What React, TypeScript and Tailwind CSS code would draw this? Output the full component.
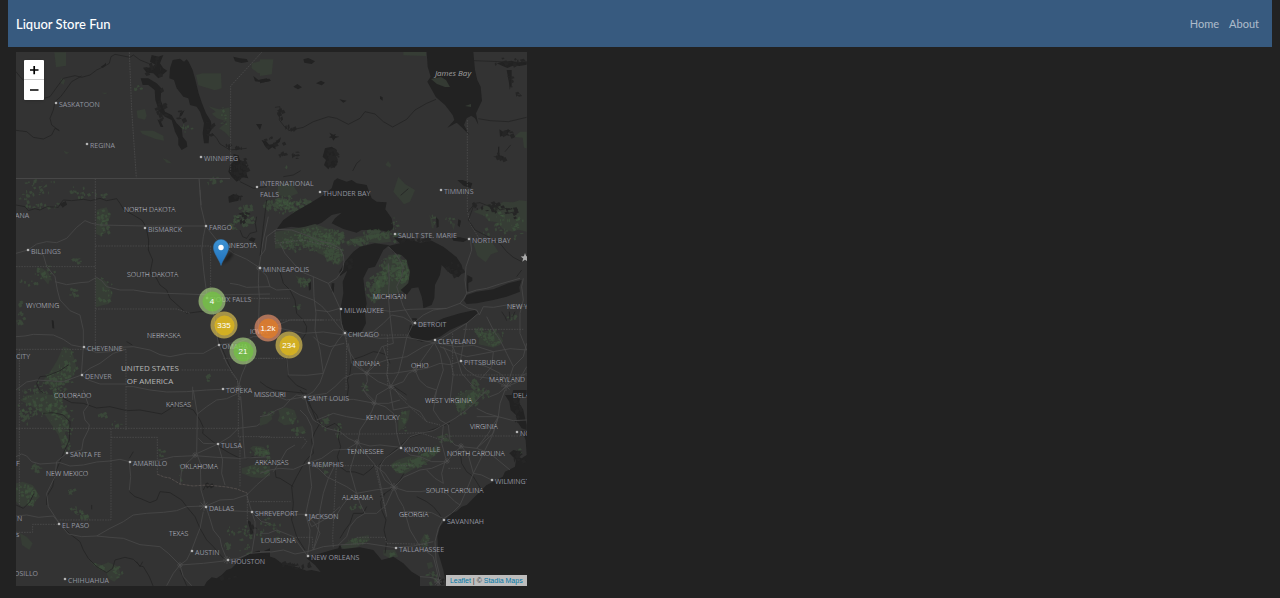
import React from "react";

type Patch = [number, number, number, number, number];

type Sheet = {
  x: number;
  y: number;
  water: string[];
  green: string[];
  rivers: string[];
  roads: string[];
  borders: string[];
  // Woodland patches: centre x, centre y, radius x, radius y, number of flecks
  woods: Patch[];
  // Lake districts, same fields
  ponds: Patch[];
};

// Each sheet is drawn at three units per map pixel and placed at its origin.
const sheets: Sheet[] = [
  {
    x: 0,
    y: 0,
    water: [
      "M518,180L540,176 552,185 560,178 566,185 578,210 585,235 596,280 606,310 618,340 632,362 637,385 628,400 626,430 612,430 608,400 612,370 600,335 590,320 570,315 565,295 550,290 530,265 522,240 508,235 510,205Z",
      "M422,235L445,235 470,250 484,265 482,300 495,335 515,345 530,370 545,385 548,410 560,425 562,440 545,450 535,435 535,415 525,395 515,360 495,350 478,335 466,300 464,270 445,255 428,255Z",
      "M455,165L475,170 490,165 480,190 490,205 502,212 475,235 460,220 440,218 430,205 455,202 468,195 450,185Z",
      "M472,358l10,5 8,18 -8,0zM540,340l14,-10 -8,16 -8,6z",
      "M690,495L705,480 700,462 715,466 720,480 730,485 742,500 738,520 745,535 728,532 710,545 695,530 685,515Z",
      "M700,170l20,5 20,2 5,8 -20,4 -20,-5zM760,228l15,12 25,-5 10,8 -20,4 -25,-3zM768,372l18,0 -6,18zM785,420l12,10 13,5 0,12 -15,-8z",
      "M302,200l10,-6 6,-6 0,8 -10,8z",
    ],
    green: [
      "M163,157h35v40l-30,5z",
      "M588,225l20,-5 55,0 2,45 -20,6 -50,-15z",
      "M410,332l25,-5 5,20 -5,12 -22,-5z",
      "M420,392l40,0 30,15 2,15 -25,-5 -40,-15z",
      "M755,190l30,-8 30,0 0,40 -40,-2 -20,-15z",
      "M625,318l18,6 14,4 14,-2 18,-4 0,90 -14,-15 -18,-12 10,-8 14,-12 -30,-10 -16,-14 12,-6z",
      "M183,235l12,5 -4,14 -10,-5zM488,475l15,5 12,10 -15,-2zM190,452l18,6 -10,5zM305,278l18,0 -8,5z",
    ],
    rivers: [
      "M48,215L60,230 72,242",
      "M132,295L150,290 168,265 190,235 225,227 245,232 270,225 290,210 315,198 328,190 333,170 345,163 370,168 390,172 400,165 420,180 445,190 455,195",
      "M245,228L215,245 197,270 182,290 165,305 160,330 150,355 155,375 178,392 165,385 155,405 130,417 100,412 80,395 48,391",
      "M637,400L650,415 660,432 690,450 740,445",
      "M720,545L760,565 800,560",
    ],
    roads: [],
    borders: ["M388,157L395,330 409,533", "M286,535V600", "M785,157L692,258V515"],
    woods: [
      [120, 560, 60, 26, 22],
      [665, 350, 20, 30, 8],
      [560, 385, 30, 15, 9],
      [640, 540, 25, 12, 14],
      [240, 575, 40, 20, 8],
      [410, 265, 10, 10, 5],
    ],
    ponds: [
      [455, 200, 32, 35, 14],
      [480, 320, 18, 55, 16],
      [540, 350, 15, 20, 5],
      [625, 385, 12, 30, 8],
      [715, 505, 28, 36, 34],
      [680, 440, 55, 8, 8],
    ],
  },
  {
    x: 260,
    y: 40,
    water: [
      "M500,36L503,80 512,110 502,125 528,172 555,195 578,225 583,240 562,263 590,248 605,262 628,285 612,255 620,235 634,227 645,235 655,255 648,220 666,182 662,140 652,120 645,90 640,36Z",
      "M50,568L70,540 105,515 150,490 185,468 215,445 222,422 232,415 260,425 275,420 290,430 320,435 335,475 350,485 380,487 376,508 395,535 400,565 385,577 370,572 345,570 305,570 290,578 250,567 215,550 225,535 245,518 215,525 185,548 140,566 95,560Z",
      "M195,325L215,320 230,330 228,350 234,365 224,383 210,380 205,388 192,375 198,360 188,350Z",
      "M130,58l15,-4 20,10 -10,8 -22,-4zM168,130l15,-8 12,6 -10,8zM100,140l12,-8 14,10 -12,6zM238,178l22,4 -10,6zM360,168l8,4 0,10 -8,-6z",
      "M592,420l15,0 30,10 -5,14 -20,-6zM0,120l28,-4 5,6 -33,8zM740,90l15,0 0,50 -6,0z",
      "M710,70l18,-5 12,5 14,-8 18,6 28,-4 0,10 -22,4 -16,-2 -20,8 -14,-6z",
      "M5,300l14,4 8,10 14,-2 12,-12 10,-8 -4,14 -14,10 2,12 -10,-6 -12,8 -8,-14z",
      "M718,268l12,8 14,-8 8,4 -10,8 8,8 -16,-4 -14,6z",
      "M208,278l12,6 8,-2 -4,6 14,2 -12,4 -6,8 -4,-8 -10,-2 8,-4z",
      "M700,350l14,-2 0,-28 4,0 0,26 14,4 -2,6 -16,-2z",
    ],
    green: [
      "M430,36h68v12l-68,-2z",
      "M415,410l20,22 30,18 -15,35 -18,8 -32,-38z",
      "M780,275h20v50l-8,-2 -4,-30 -25,-2z",
      "M0,58h40l-5,45 -35,5z",
      "M55,435l40,-5 20,30 -30,12 -35,-8z",
      "M640,515l20,-8 22,-14 28,4 20,-12 30,2 18,-6 22,2 0,92 -24,-6 -18,6 -30,-8 -16,-20 -26,-4 -14,-16z",
      "M376,375l8,-12 10,12 -4,8z",
      "M508,525l8,10 6,30 -6,0zM568,535l10,14 8,2 -6,20 -4,-16z",
    ],
    rivers: [
      "M85,272L130,262 160,245 205,230 230,235 265,253 300,235 315,215 345,222 370,245 398,261 440,238 465,210 500,190 528,178",
      "M655,236L690,242 745,245 800,232",
      "M642,62L720,65 800,68",
      "M45,202L60,200 58,240 75,262 90,272",
      "M278,393L290,370 302,360",
      "M70,410L100,405 122,392",
      "M622,518L645,490 660,488 690,500 705,496 720,510 740,505 745,520 762,516",
      "M735,335L752,315M422,466L445,446",
    ],
    roads: [],
    borders: ["M622,240V510L630,550 660,600"],
    woods: [
      [75, 480, 35, 14, 40],
      [95, 505, 50, 22, 60],
      [130, 485, 30, 10, 24],
      [720, 540, 70, 40, 20],
      [75, 378, 4, 4, 3],
    ],
    ponds: [
      [40, 305, 38, 20, 8],
      [735, 280, 22, 12, 6],
      [718, 350, 22, 12, 6],
      [95, 265, 30, 8, 6],
      [57, 225, 8, 24, 6],
      [58, 345, 12, 6, 4],
      [105, 345, 12, 10, 5],
      [740, 65, 55, 14, 12],
      [700, 510, 60, 12, 12],
      [748, 115, 8, 30, 6],
      [770, 160, 8, 8, 3],
      [212, 352, 20, 30, 24],
    ],
  },
  {
    x: 0,
    y: 190,
    water: ["M685,20l15,-8 20,6 -5,14 -28,6zM745,150l10,-8 12,4 -6,10zM155,390l6,2 2,24 -6,-2z"],
    green: [
      "M110,232l15,2 20,13 12,25 -8,-2 -4,14 -12,-14 -8,-8z",
      "M286,262l12,4 18,6 14,24 8,16 -6,14 -6,16 -18,4 -20,6z",
      "M290,60l10,-4 20,-4 6,15 6,10 -8,18 -8,18 4,14 -20,10 -12,-6z",
      "M190,470l15,4 10,6 6,20 9,35 -10,20 -20,25 -18,6 -22,14 -16,-18 -14,-12 14,-16 16,-24 10,-16z",
    ],
    rivers: [
      "M48,45L75,50 85,62 105,56 120,60 140,50 175,52 182,40 190,30 215,32 250,28 272,32 300,25 320,32 350,26 360,40 372,60 400,75 425,90 432,100 440,120 446,150 445,180 458,210 450,250 468,262 480,285 500,300 510,325 560,370 600,365 625,365",
      "M645,380L652,430 660,460 690,530 712,575",
      "M130,610L118,600 110,580 120,560 140,558 160,550 180,542 205,525",
      "M380,455L397,465",
      "M720,120L728,140 740,145 750,130 770,125 766,100 770,80",
    ],
    roads: [
      "M48,190L84,180 110,162 140,155 170,158 200,145 230,112 255,92 275,100 300,105 435,108 617,108",
      "M84,180L130,195 140,230 165,260 172,300 180,330 210,362 240,375 250,420 250,470 244,555",
      "M165,275L200,284 240,278 265,276 290,262 305,272 320,290 360,300 400,300 450,308 500,310 640,315 810,312",
      "M48,440L75,438 100,433 160,435 190,448 215,465 250,472 290,488 330,485 360,472 400,470 450,480 480,494 510,500 560,490 610,490 655,465",
      "M244,555L270,535 300,520 340,490 378,478",
      "M48,600L80,576 110,570 190,575 244,555 265,570 300,582 378,582",
      "M378,590L400,590 450,600 500,606 560,605 620,600 667,598 715,590",
      "M600,0L603,50 617,108 610,140 605,180 612,250 620,310 640,370 655,460 680,520 712,570 718,630",
      "M617,108L650,150 700,190 740,208 777,232 810,240",
      "M777,232L775,280 778,320 775,430",
      "M655,465L720,455 760,440 810,440",
      "M715,590L725,555 740,520 752,450",
      "M690,280L715,284 740,292 810,290",
      "M777,232L790,150 805,80",
      "M578,590V630",
    ],
    borders: [
      "M286,0V480",
      "M286,168H632",
      "M48,230H286",
      "M286,357H530L570,370",
      "M48,478H378V720",
      "M58,478V720",
      "M632,168V310",
      "M545,540H690L720,585V630",
      "M670,505H810",
      "M625,325H810",
    ],
    woods: [
      [305, 75, 20, 20, 14],
      [310, 115, 16, 30, 14],
      [310, 300, 26, 40, 16],
      [130, 245, 30, 22, 18],
      [85, 275, 30, 10, 8],
      [215, 310, 14, 16, 10],
      [200, 530, 30, 50, 36],
      [165, 575, 45, 34, 44],
      [110, 600, 60, 28, 34],
      [225, 210, 20, 8, 10],
      [735, 60, 24, 16, 26],
      [730, 90, 34, 20, 36],
      [700, 95, 18, 24, 16],
      [60, 385, 16, 22, 12],
      [70, 20, 22, 20, 12],
      [120, 45, 60, 12, 18],
      [260, 15, 60, 10, 14],
      [620, 570, 6, 16, 6],
      [55, 340, 6, 8, 6],
    ],
    ponds: [
      [725, 78, 20, 18, 12],
      [185, 42, 8, 6, 7],
      [705, 22, 16, 8, 6],
    ],
  },
  {
    x: 260,
    y: 200,
    water: [
      "M388,136L370,150 360,170 345,200 325,205 318,218 310,235 315,280 320,310 315,340 318,370 305,395 290,404 275,408 252,395 243,360 242,325 250,280 248,245 262,212 240,228 238,215 255,185 280,155 300,140 345,130Z",
      "M385,138L420,130 400,112 450,118 480,128 515,122 550,140 575,160 590,172 605,195 610,215 595,232 570,220 545,195 540,225 525,255 523,295 515,315 490,325 488,305 485,290 475,262 455,265 440,285 422,270 445,250 450,215 440,180 425,165 400,158Z",
      "M445,400L450,375 465,372 480,382 510,375 550,355 600,340 645,330 655,340 625,365 570,390 540,410 510,420 485,425 455,415Z",
      "M612,302L620,285 650,275 700,268 745,250 785,240 778,262 780,275 740,290 700,300 650,310 620,312Z",
      "M215,250l8,0 -2,28 -8,-5zM145,250l8,-4 0,22 -6,4zM456,355l14,0 2,12 -12,4z",
      "M528,50l8,10 0,20 -6,4zM595,58l8,4 -4,20 -6,-6zM575,112l25,0 25,6 -15,8 -30,-4zM622,225l15,8 0,10 -12,6 0,25 -6,0z",
    ],
    green: [
      "M45,95l30,-4 60,-11 30,-8 50,18 40,15 -15,25 10,50 -14,16 -16,-6 -25,-22 -20,-8 -24,-20 -36,-4 -70,10z",
      "M255,125l35,-15 40,-4 50,-11 15,30 -40,5 -50,-6 -40,14z",
      "M385,165l20,-2 20,14 15,8 12,45 -10,22 -10,20 -20,8 -30,6 -35,-4 0,-50 20,-22z",
      "M640,130l55,-5 20,30 -22,8 -16,24 -25,-20z",
      "M660,398l20,-6 35,6 15,25 -10,12 -20,8 -45,-10z",
      "M105,225l10,6 20,4 10,20 -15,4 -10,-8z",
    ],
    rivers: [
      "M60,215L70,250 90,270 105,300 110,340 128,358 140,380 138,400 125,420 95,450 80,480 85,530 110,556 140,570",
      "M260,600L266,560 262,540 270,520 275,480 310,468 340,455 360,458 380,465 390,490",
      "M640,20L625,60 645,90 680,108 720,130 740,155 760,172 785,185",
      "M20,0L10,80 0,170",
      "M770,230L785,210",
      "M0,545L20,560 40,570 140,580",
      "M395,555L440,585",
      "M725,335L735,350 740,362M765,335L758,350M748,335L750,360",
    ],
    roads: [
      "M0,208L20,228 30,260 50,270 90,268 120,285 160,300 185,318 205,340 230,372 253,398",
      "M0,170L15,150 20,110 50,88",
      "M60,130L75,160 105,195 130,218 160,230 205,250 222,285 240,325",
      "M50,88L95,90 150,110 180,124 210,130 240,145 250,165 252,185 248,210 230,235 205,250",
      "M160,230L162,290 168,340 165,390 180,450 190,520",
      "M240,325L205,335 165,330",
      "M240,325L244,370 253,398",
      "M0,370L60,385 130,400 190,396 253,405 340,395 370,370 395,345 430,352 460,370",
      "M253,398L235,420 215,450 190,520 180,548 160,575 135,590",
      "M253,398L265,450 290,490 320,520",
      "M270,405L310,408 360,415 440,412 480,420 523,428 590,440 640,436 700,455 750,446 800,450",
      "M320,520L355,545 392,560 440,600",
      "M320,520L400,520 465,510 500,505 540,490 570,494 601,484 640,488 680,500 720,520 750,550",
      "M320,520L280,522 250,535 225,560 200,580 135,590",
      "M320,520L345,480 365,440 400,430 395,390 390,345 385,290 388,240 385,190",
      "M460,370L445,345 430,320 410,260 425,230 430,200 410,165 385,140",
      "M460,370L440,412 430,460 415,520 392,560",
      "M523,428L500,460 465,510 445,520 430,545 392,560",
      "M523,428L540,460 550,510 530,570 520,600",
      "M460,370L490,345 520,330 560,325 600,310 612,295 620,280 650,270 680,265 720,252 780,235",
      "M320,325L350,328 395,335 450,328 560,325",
      "M600,310L625,325 650,330 658,345",
      "M655,340L620,370 570,400 523,428",
      "M658,345L670,320 700,322 740,315 800,320",
      "M601,484L605,460 610,430 620,370",
      "M601,484L620,510 650,530 690,535 720,550 740,560 770,535 800,520",
      "M740,560L750,530 760,500 740,460 720,420 700,390 680,350",
      "M740,560L715,580 690,590",
      "M740,560L775,545 800,500",
      "M790,235L785,260 790,300 780,340 780,400 800,450",
      "M620,280L615,240 618,200 635,150 630,110",
      "M80,470L85,525 140,526 190,520",
      "M0,390L50,376 90,360 190,360",
      "M160,410L180,430 210,440 253,430",
      "M320,520L322,545 310,570 340,600",
      "M320,520L275,490 265,430",
      "M320,520L350,490 380,480 440,470 490,440 523,428",
      "M392,560L380,525 385,490 370,440",
      "M465,510L478,540 500,560 530,570",
      "M550,440L570,480 580,520 570,600",
      "M575,430L590,470 605,520 640,560",
      "M700,455L695,500 660,540",
      "M540,440L590,460 620,470 700,455",
      "M760,500L790,470 800,430",
    ],
    borders: [
      "M0,295H90",
      "M60,360H240",
      "M260,405L258,570",
      "M383,405V555",
      "M275,405H440",
      "M578,400V525H800",
      "M610,388H790",
      "M45,90V130L130,120 190,135 245,150",
      "M0,475H75",
    ],
    woods: [
      [90, 125, 45, 30, 50],
      [155, 115, 50, 38, 120],
      [210, 110, 40, 25, 80],
      [215, 155, 30, 35, 90],
      [290, 125, 30, 12, 45],
      [345, 103, 45, 16, 80],
      [400, 205, 46, 42, 130],
      [425, 220, 24, 34, 50],
      [335, 265, 22, 38, 80],
      [360, 235, 24, 24, 44],
      [130, 245, 22, 14, 24],
      [640, 565, 14, 28, 40],
      [610, 585, 20, 16, 26],
      [50, 15, 45, 16, 80],
      [690, 410, 42, 26, 44],
      [650, 395, 14, 14, 18],
      [720, 80, 65, 50, 22],
      [110, 320, 14, 6, 6],
      [310, 555, 12, 18, 9],
      [515, 60, 6, 20, 6],
      [565, 60, 12, 10, 6],
      [400, 85, 8, 40, 14],
      [760, 350, 20, 12, 8],
    ],
    ponds: [
      [680, 15, 55, 8, 12],
      [750, 40, 25, 20, 8],
      [580, 205, 28, 22, 10],
      [470, 120, 60, 6, 10],
      [262, 185, 16, 24, 10],
    ],
  },
  {
    x: 0,
    y: 390,
    water: ["M810,475L790,484 775,482 750,490 735,500 715,510 705,525 695,535 680,540 665,555 650,565 635,562 620,575 612,590 H810Z", "M742,390l10,5 8,35 -6,2z"],
    green: [
      "M60,30l20,-14 40,-6 30,4 30,6 10,25 20,35 -10,20 -5,30 10,25 -20,10 -10,-30 -20,-30 -20,-30 -30,-20z",
      "M48,280l20,-5 30,10 10,14 12,21 -10,10 -10,15 -35,5 -17,-15z",
      "M60,430l20,10 18,20 -10,20 -22,-15z",
      "M270,515l35,10 20,-8 30,13 8,25 -20,20 -16,-8 -8,-18 -26,-14z",
      "M725,235l40,-12 45,5 0,30 -25,6 -30,-2 -30,-12z",
      "M750,175l10,-8 30,3 20,20 -35,10z",
      "M240,375l25,0 5,14 -30,0z",
    ],
    rivers: [
      "M178,402L210,432 240,455 250,480 265,505 290,530 320,548 338,535 345,510 375,502 400,508 420,528 430,530 448,560 460,590",
      "M130,70L160,68 190,75 210,95 208,150 190,190 165,250 158,290 140,320 140,345",
      "M180,20L215,38 250,40 290,54 330,50 380,62 420,60 485,72 520,50 560,52 580,60 600,90 610,112 608,130 630,148 660,172 690,190 720,205 740,206 760,200",
      "M388,305L405,320 420,325 450,338 470,330 480,305 510,308 545,330 560,350 585,380 600,415 620,450 640,470 670,505",
      "M48,345L70,355 90,335 102,310",
      "M388,205L400,185",
      "M275,345V358",
      "M610,300L620,280 628,290",
      "M540,540L560,587",
      "M410,515L420,530 428,515",
    ],
    roads: [
      "M48,200L65,192 80,198 95,215 120,222 180,218 210,228 250,225 290,216 330,213 360,208 388,215 470,212 520,200 585,197 650,202 722,205 810,200",
      "M250,0L265,45 250,65 255,90 268,105 265,120 250,150 245,180 200,190 170,215 165,260 150,290 140,310 145,350 178,400",
      "M178,400L205,432 245,440 290,438 330,415 370,395 400,375 440,370 490,367 530,362 560,350 617,348",
      "M290,438L330,442 370,445 420,464 480,470 505,490 540,525 560,510 575,480 590,440 600,415 610,365",
      "M388,215L392,260 388,300",
      "M580,0L592,72 590,190 601,220 603,300 617,348",
      "M592,72L620,50 650,30 680,26 715,10",
      "M592,190L654,162 690,140 715,115 770,108 810,80",
      "M617,348L650,352 680,362 755,365 810,367",
      "M617,348L628,380 640,420 660,445 665,470 681,509",
      "M540,525L610,520 681,512",
      "M540,525L520,550 500,587",
      "M540,525L550,560 575,587",
      "M681,509L715,505 750,490 810,485",
      "M617,348L660,330 700,328 740,315 770,285 810,250",
      "M48,378L80,375 115,382 160,378 178,400",
      "M755,365L765,395 765,430 755,490",
      "M654,162L668,210 665,250 675,285",
      "M585,197L560,220 545,240 540,285",
      "M595,145L610,160 654,162",
      "M740,315L755,365",
      "M722,20L728,90 730,150 735,205",
      "M755,365L785,395 810,400",
    ],
    borders: [
      "M48,115H715",
      "M333,115V390H175",
      "M333,142H472V250",
      "M58,115V345",
      "M48,427H98V403H175",
      "M715,0V140H810M720,140V290",
      "M742,310V400",
      "M742,335H810",
    ],
    woods: [
      [100, 45, 50, 38, 44],
      [165, 40, 44, 44, 44],
      [185, 95, 34, 50, 44],
      [70, 75, 20, 30, 16],
      [195, 160, 14, 24, 18],
      [105, 235, 14, 14, 22],
      [75, 300, 28, 20, 26],
      [90, 320, 22, 24, 18],
      [210, 305, 16, 12, 8],
      [225, 360, 28, 14, 12],
      [250, 380, 14, 12, 10],
      [300, 75, 16, 8, 8],
      [345, 550, 18, 22, 12],
      [300, 525, 24, 10, 8],
      [775, 185, 30, 14, 26],
      [765, 240, 40, 14, 18],
      [725, 430, 28, 24, 16],
      [690, 425, 14, 16, 8],
      [680, 465, 8, 20, 12],
      [780, 430, 14, 20, 10],
      [735, 475, 22, 16, 8],
      [345, 100, 20, 8, 6],
      [540, 245, 5, 30, 6],
      [480, 185, 8, 14, 5],
    ],
    ponds: [
      [620, 288, 10, 8, 5],
      [752, 415, 6, 22, 6],
      [685, 560, 30, 10, 5],
    ],
  },
  {
    x: 260,
    y: 390,
    water: [
      "M735,15L748,35 752,60 768,75 772,95 785,115 800,120 800,105 790,60 778,40 780,20 800,25 800,0 760,0 755,15Z",
      "M800,195L785,205 770,200 785,185 760,180 748,190 768,210 765,230 735,245 728,260 700,275 680,285 665,300 640,325 620,345 605,350 590,364 575,370 555,390 540,410 532,440 535,490 550,540 560,590H810V120L800,125 785,120 797,150Z",
      "M0,490L45,505 65,520 85,525 110,532 140,542 155,540 182,546 165,525 140,505 165,495 215,480 235,475 240,460 245,478 300,472 340,480 365,510 400,500 430,520 455,545 480,560 480,590H0Z",
    ],
    green: [
      "M0,85l15,-10 18,-4 4,16 -16,14 -21,6zM55,60l22,-8 26,8 8,22 -10,20 -28,4 -20,-14 6,-16zM108,112l20,-4 10,14 -12,10 -18,-6z",
      "M390,225l20,-14 30,-11 30,-2 30,-13 30,-20 15,15 -20,14 -20,21 -50,25 -20,12 -25,-2z",
      "M585,20l20,-6 20,-14 45,0 -14,24 -16,21 -30,20z",
      "M370,480l35,0 10,20 -25,5 -20,-10z",
      "M240,470l40,-25 45,-10 5,15 -40,22 -35,5z",
      "M480,455l8,-14 7,-11 8,12 -2,18 -8,15 -8,-4z",
      "M415,85l15,-20 20,-5 -5,30 -12,20 -18,15z",
      "M500,520l15,-5 5,15 -15,8z",
    ],
    rivers: [
      "M135,20L150,50 170,75 180,100 165,125 155,150 160,190 148,200 135,215 110,260 95,290 100,340 95,390 110,440 135,480",
      "M120,0L145,30 172,100 200,112 225,100 240,115 235,145 242,170 232,200 240,230 260,245 285,246 310,255 330,240 345,225 355,228 375,205 422,165 450,142 500,125 535,112 570,100",
      "M375,310L362,335 365,360 378,390 372,420 380,455 375,490",
      "M402,292L420,270 432,250M402,292L360,320",
      "M320,350L310,370 280,370 270,400 255,420 240,445",
      "M45,240L48,262 60,265 100,290",
      "M470,320L500,335 520,350 538,372 550,395",
      "M600,180L605,220 620,245 640,260 665,300",
    ],
    roads: [
      "M135,20L145,60 160,90 200,115 240,125 265,145 293,158",
      "M135,20L110,15 90,30 70,52 50,60 25,75 0,80",
      "M135,20L180,22 220,30 280,28 345,40 385,40 420,30",
      "M345,40L335,65 320,90 300,120 293,158 282,200 270,240 290,310",
      "M345,40L375,50 400,70 408,100 410,130 422,172",
      "M345,40L325,22 310,0",
      "M0,250L30,240 60,235 100,238 147,218 185,205 220,180 260,178 293,158 330,168 360,165 422,172",
      "M147,218L160,160 155,110 140,80 120,60",
      "M147,218L175,235 200,260 230,275 260,290 290,310 345,300 402,292",
      "M147,218L155,290 145,335 137,373 150,420 148,460 142,497",
      "M0,368L60,372 137,373 190,380 230,375 245,350 260,330 290,310",
      "M137,373L165,400 180,430 160,480",
      "M290,310L300,340 315,370 350,370 378,345 402,292",
      "M315,370L290,385 270,410 260,440 235,465",
      "M0,485L35,486 70,480 105,492 142,485 190,470 235,465 320,460 405,473 460,468 520,455",
      "M402,292L375,250 350,230 320,195 293,158",
      "M402,292L375,270 360,240 365,220 375,205 422,172",
      "M402,292L430,262 480,240 515,235 560,215 585,185 605,170 650,175 685,130 715,80 720,40 735,0",
      "M402,292L440,304 480,305 520,300 560,310 585,335 600,345",
      "M402,292L415,325 430,350 440,385 450,420 480,470 520,500 530,540 540,587",
      "M422,172L450,195 480,200 515,215 555,215 545,250 550,280 525,265 500,240",
      "M422,172L450,140 480,130 520,122 550,105 585,85 620,60 650,30 680,0",
      "M550,105L545,160 560,215",
      "M550,386L575,370 600,345 620,300 640,250 655,220 670,190 695,140 715,80",
      "M550,386L535,415 525,455 528,510 540,560",
      "M550,386L515,368 490,365 430,365",
      "M605,170L585,165 570,150 565,105 540,90 520,60 525,30 530,0",
      "M650,175L690,190 720,215 750,240",
      "M650,175L700,130 715,80 760,92 800,90",
      "M640,250L665,255 695,270",
      "M650,80L715,80 680,70 650,55",
      "M390,0L400,60 450,50 480,65 500,95",
      "M0,430L25,430 50,420 100,440 142,497",
      "M40,245L60,215 80,180 105,165",
      "M225,225L205,265 190,310 180,360 175,420 160,480",
      "M137,373L155,410 200,385 240,350",
      "M350,230L365,300 380,380",
      "M480,560L510,562 540,570",
      "M345,40L350,15 392,-10",
      "M605,170L625,195 640,250",
      "M0,20L40,15 80,30 135,20",
      "M170,90L220,70 260,80 320,90",
    ],
    borders: [
      "M0,142H130L140,155 125,175",
      "M225,132H390L480,128 545,150 560,138H780",
      "M150,227H360H460",
      "M229,227L218,440 220,475",
      "M345,227L378,370",
      "M290,442H375L380,460 500,463",
      "M0,335H92",
      "M98,442H158V480",
      "M565,235H605",
      "M400,-10L420,20 460,60 500,95 540,105",
    ],
    woods: [
      [85, 85, 30, 20, 10],
      [20, 70, 20, 12, 8],
      [110, 120, 24, 12, 10],
      [195, 95, 20, 25, 14],
      [420, 230, 28, 14, 50],
      [465, 215, 28, 16, 50],
      [500, 185, 28, 14, 34],
      [550, 145, 24, 14, 22],
      [600, 45, 16, 26, 44],
      [635, 30, 18, 26, 44],
      [665, 10, 20, 18, 20],
      [430, 90, 12, 35, 14],
      [15, 190, 15, 30, 12],
      [20, 400, 22, 25, 12],
      [50, 420, 16, 25, 9],
      [290, 455, 30, 12, 20],
      [390, 495, 20, 10, 12],
      [495, 455, 10, 20, 20],
      [280, 350, 20, 8, 8],
      [770, 180, 10, 10, 6],
      [510, 565, 20, 22, 14],
      [230, 120, 10, 25, 10],
      [190, 240, 8, 30, 6],
    ],
    ponds: [
      [100, 525, 50, 14, 14],
      [765, 60, 14, 45, 16],
      [770, 200, 18, 20, 12],
      [540, 575, 10, 14, 6],
    ],
  },
];

type Place = [string, number, number];

// Name, left edge of the text, middle line of the text
const cities: Place[] = [
  ["SASKATOON", 59, 104],
  ["REGINA", 90, 145],
  ["WINNIPEG", 204, 158],
  ["THUNDER BAY", 323, 193],
  ["TIMMINS", 444, 191],
  ["SAULT STE. MARIE", 398, 235],
  ["NORTH BAY", 472, 240],
  ["BISMARCK", 148, 229],
  ["FARGO", 209, 227],
  ["BILLINGS", 31, 251],
  ["MINNEAPOLIS", 263, 269],
  ["SIOUX FALLS", 210, 299],
  ["MILWAUKEE", 344, 310],
  ["DETROIT", 418, 324],
  ["CHICAGO", 348, 334],
  ["CLEVELAND", 438, 341],
  ["CHEYENNE", 87, 348],
  ["OMAHA", 222, 346],
  ["PITTSBURGH", 464, 362],
  ["DENVER", 85, 376],
  ["TOPEKA", 226, 390],
  ["SAINT LOUIS", 308, 398],
  ["NORFOLK", 520, 433],
  ["TULSA", 221, 445],
  ["KNOXVILLE", 404, 449],
  ["SANTA FE", 70, 454],
  ["AMARILLO", 133, 463],
  ["MEMPHIS", 312, 464],
  ["WILMINGTON", 495, 481],
  ["DALLAS", 209, 508],
  ["SHREVEPORT", 255, 513],
  ["JACKSON", 309, 516],
  ["SAVANNAH", 447, 521],
  ["EL PASO", 62, 525],
  ["TALLAHASSEE", 399, 549],
  ["AUSTIN", 195, 552],
  ["NEW ORLEANS", 311, 557],
  ["HOUSTON", 231, 561],
  ["CHIHUAHUA", 68, 580],
];

const regions: Place[] = [
  ["NORTH DAKOTA", 124, 209],
  ["MINNESOTA", 218, 245],
  ["SOUTH DAKOTA", 127, 274],
  ["MICHIGAN", 373, 296],
  ["WYOMING", 26, 305],
  ["NEW YORK", 507, 306],
  ["IOWA", 250, 331],
  ["NEBRASKA", 147, 335],
  ["INDIANA", 353, 363],
  ["OHIO", 411, 365],
  ["MARYLAND", 489, 379],
  ["COLORADO", 54, 395],
  ["MISSOURI", 254, 394],
  ["DELAWARE", 513, 395],
  ["KANSAS", 166, 404],
  ["WEST VIRGINIA", 425, 400],
  ["KENTUCKY", 366, 417],
  ["VIRGINIA", 470, 426],
  ["TENNESSEE", 347, 451],
  ["NORTH CAROLINA", 447, 453],
  ["ARKANSAS", 255, 462],
  ["OKLAHOMA", 180, 466],
  ["NEW MEXICO", 46, 473],
  ["SOUTH CAROLINA", 426, 490],
  ["ALABAMA", 342, 497],
  ["GEORGIA", 399, 514],
  ["TEXAS", 169, 533],
  ["LOUISIANA", 261, 540],
];

const clippedNames: Place[] = [
  ["ANA", 15, 215],
  ["CITY", 16, 356],
  ["F", 16, 463],
  ["N", 17, 518],
  ["s", 16, 534],
  ["OSILLO", 14, 573],
];

// Road hubs: centre and reach of the ring roads
const hubs: [number, number, number][] = [
  [204, 506, 5],
  [227, 560, 4],
  [394, 487, 4],
  [367, 373, 3],
  [180, 565, 3],
  [259, 268, 3],
  [345, 333, 3],
  [414, 323, 3],
  [304, 397, 3],
  [506, 386, 5],
  [447, 461, 3],
  [391, 387, 3],
  [415, 370, 3],
  [239, 388, 3],
  [195, 455, 3],
  [374, 403, 3],
  [438, 582, 4],
  [461, 446, 3],
  [357, 442, 3],
];

const clusters = [
  { label: "4", x: 196, y: 249, ring: "bg-[#b5e28c]/60", core: "bg-[#6ecc39]/60" },
  { label: "335", x: 208, y: 273, ring: "bg-[#f1d357]/60", core: "bg-[#f0c20c]/60" },
  { label: "21", x: 227, y: 299, ring: "bg-[#b5e28c]/60", core: "bg-[#6ecc39]/60" },
  { label: "1.2k", x: 252, y: 276, ring: "bg-[#fd9c73]/60", core: "bg-[#f18017]/60" },
  { label: "234", x: 273, y: 293, ring: "bg-[#f1d357]/60", core: "bg-[#f0c20c]/60" },
];

// Irregular flecks spread over an ellipse; the same seed gives the same drawing.
function flecks([cx, cy, rx, ry, count]: Patch, size: number) {
  let seed = Math.round(cx * 31 + cy * 17 + count);
  const next = () => {
    seed = (seed * 1103515245 + 12345) % 2147483648;
    return seed / 2147483648;
  };
  let d = "";
  for (let i = 0; i < count; i++) {
    const angle = next() * Math.PI * 2;
    const reach = next() ** 0.7;
    const x = cx + Math.cos(angle) * reach * rx;
    const y = cy + Math.sin(angle) * reach * ry;
    const w = size * (0.3 + next() * 1.2);
    const h = size * (0.3 + next() * 1.2);
    d += `M${x.toFixed(1)},${y.toFixed(1)}l${w.toFixed(1)},${(-h / 2).toFixed(1)} ${(w / 2).toFixed(1)},${h.toFixed(1)} ${(-w).toFixed(1)},${(h / 2).toFixed(1)}z`;
  }
  return d;
}

function MapSheet({ sheet }: { sheet: Sheet }) {
  return (
    <g transform={`translate(${sheet.x} ${sheet.y}) scale(0.33333)`} fill="none" strokeLinejoin="round">
      <path d={sheet.green.join("")} fill="#363d35" />
      {sheet.woods.map((w) => (
        <path key={w.join()} d={flecks(w, 6)} fill="#436040" fillOpacity="0.45" />
      ))}
      <path d={sheet.water.join("")} fill="#222222" />
      <path d={sheet.ponds.map((p) => flecks(p, 8)).join("")} fill="#252525" />
      <path d={sheet.rivers.join("")} stroke="#242424" strokeWidth="2.5" />
      <path d={sheet.roads.join("")} stroke="#484848" strokeWidth="2.5" />
      <path d={sheet.borders.join("")} stroke="#525252" strokeWidth="2" strokeDasharray="5 3" />
    </g>
  );
}

function BaseMap() {
  return (
    <svg
      className="block shrink-0 select-none font-['Open_Sans','Noto_Sans',sans-serif]"
      width="511"
      height="534"
      viewBox="16 52 511 534"
      role="img"
      aria-label="Map of the central United States and Canada"
    >
      {sheets.map((s) => (
        <MapSheet key={`${s.x}-${s.y}`} sheet={s} />
      ))}
      <path d="M16,178.500H230M199,178L201,205" stroke="#474747" fill="none" />
      <path d="M157,474L164,477 170,478 180,484 193,486 207,485 227,487 237,489 247,493" stroke="#5a5452" strokeWidth="0.800" fill="none" strokeDasharray="3 1" />
      <path
        d={hubs
          .map(([x, y, r]) => `M${x - r},${y}h${2 * r}M${x},${y - r}v${2 * r}M${x - r * 0.7},${y - r * 0.7}l${r * 1.4},${r * 1.4}M${x - r * 0.7},${y + r * 0.7}l${r * 1.4},${-r * 1.4}`)
          .join("")}
        stroke="#4d4d4d"
        strokeWidth="0.700"
        fill="none"
      />
      <path d="M431,79l10,-2 5,3 4,7 -5,0 -8,-3zM465,106l6,-2 0,3z" fill="#343a33" />
      <path d="M525,253l1.200,3.200 3.300,.2 -2.600,2 1,3.300 -2.900,-1.900 -2.800,1.900 1,-3.300 -2.500,-2 3.200,-.2z" fill="#aaaaaa" />
      <g fill="#9295a0" fontSize="7">
        {cities.map(([name, x, y]) => (
          <g key={name}>
            <circle cx={x - 3} cy={y - 1} r="1.300" fill="#b4b4b4" />
            <text x={x} y={y + 3}>{name}</text>
          </g>
        ))}
        <text x="260" y="186">INTERNATIONAL</text>
        <text x="260" y="197">FALLS</text>
        <circle cx="257" cy="187" r="1.300" fill="#b4b4b4" />
        {clippedNames.map(([name, x, y]) => (
          <text key={name} x={x} y={y + 3}>{name}</text>
        ))}
      </g>
      <g fill="#cbcfdc" fontSize="7" fontWeight="300">
        {regions.map(([name, x, y]) => (
          <text key={name} x={x} y={y + 3}>{name}</text>
        ))}
      </g>
      <g fill="#b8b8b8" fontSize="8" textAnchor="middle">
        <text x="150" y="371">UNITED STATES</text>
        <text x="150" y="384">OF AMERICA</text>
        <text x="453" y="76" fontStyle="italic" fill="#a0a0a0">James Bay</text>
      </g>
    </svg>
  );
}

function StorePin() {
  return (
    <button type="button" aria-label="Selected store" className="absolute left-[197px] top-[187px] block">
      <svg width="30" height="28" viewBox="0 0 30 28">
        <defs>
          <linearGradient id="pin" x1="0" y1="0" x2="0" y2="1">
            <stop offset="0" stopColor="#3e93d3" />
            <stop offset="1" stopColor="#1f70bb" />
          </linearGradient>
          <filter id="soft" x="-50%" y="-50%" width="200%" height="200%">
            <feGaussianBlur stdDeviation="1.500" />
          </filter>
        </defs>
        <path d="M8,26L15,16Q19,11 20,14Q20,20 8,26Z" fill="#000000" fillOpacity="0.4" filter="url(#soft)" />
        <path d="M8,26.500C6.500,21 0.300,14 0.300,8.300A7.700,7.900 0 0 1 15.700,8.300C15.700,14 9.500,21 8,26.500Z" fill="url(#pin)" stroke="#2d74b0" strokeWidth="0.500" />
        <circle cx="8" cy="8.500" r="2.700" fill="#ffffff" />
      </svg>
    </button>
  );
}

export default function App() {
  return (
    <div className="min-h-screen bg-[#222222] px-2 font-['Lato',sans-serif] text-white">
      <nav className="flex h-[47px] items-center justify-between bg-[#375a7f] px-2">
        <a href="#" className="text-[13px] font-medium leading-5">Liquor Store Fun</a>
        <ul className="flex text-[11px] leading-5 text-white/60">
          <li><a href="#home" className="px-[5px]">Home</a></li>
          <li><a href="#about" className="px-[5px]">About</a></li>
        </ul>
      </nav>
      <main className="grid grid-cols-12 pb-3 pt-[5px]">
        <section className="col-span-5 px-2">
          <div className="relative h-[534px] overflow-hidden bg-[#333333]">
            <BaseMap />
            <StorePin />
            {clusters.map((c) => (
              <button
                key={c.label}
                type="button"
                className={`absolute flex size-[27px] -translate-x-1/2 -translate-y-1/2 items-center justify-center rounded-full ${c.ring}`}
                style={{ left: c.x, top: c.y }}
              >
                <span className={`flex size-5 items-center justify-center rounded-full font-['Liberation_Sans',sans-serif] text-[8px] leading-5 text-white ${c.core}`}>
                  {c.label}
                </span>
              </button>
            ))}
            <div className="absolute left-2 top-2 w-5 divide-y divide-[#cccccc] overflow-hidden rounded-[1px] bg-white text-black shadow">
              <button type="button" aria-label="Zoom in" className="flex h-5 w-full items-center justify-center">
                <svg width="10" height="10" viewBox="0 0 10 10" stroke="currentColor" strokeWidth="1.700">
                  <path d="M1,5H9.500M5.200,1V9.200" />
                </svg>
              </button>
              <button type="button" aria-label="Zoom out" className="flex h-5 w-full items-center justify-center">
                <svg width="10" height="10" viewBox="0 0 10 10" stroke="currentColor" strokeWidth="1.700">
                  <path d="M1,5H9.500" />
                </svg>
              </button>
            </div>
            <p className="absolute bottom-0 right-0 bg-white/70 px-1 font-['Liberation_Sans',sans-serif] text-[7px] leading-[11px] text-[#333333]">
              <a href="#leaflet" className="text-[#0078a8]">Leaflet</a> | © <a href="#stadia" className="text-[#0078a8]">Stadia Maps</a>
            </p>
          </div>
        </section>
      </main>
    </div>
  );
}
